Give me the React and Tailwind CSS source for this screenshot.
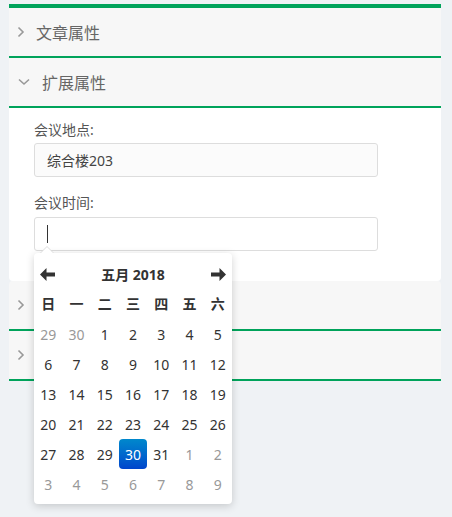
import React from 'react';

const FONT = { fontFamily: '"Noto Sans", "Noto Sans CJK SC", sans-serif' };

function ChevronRight() {
  return (
    <svg width="8" height="12" viewBox="0 0 8 12" className="shrink-0">
      <polyline points="1.5,1.5 6,6 1.5,10.5" fill="none" stroke="#999" strokeWidth="1.6" />
    </svg>
  );
}

function ChevronDown() {
  return (
    <svg width="12" height="8" viewBox="0 0 12 8" className="shrink-0">
      <polyline points="1,1.5 6,6 11,1.5" fill="none" stroke="#999" strokeWidth="1.6" />
    </svg>
  );
}

function Arrow({ dir }) {
  return (
    <svg width="15" height="13" viewBox="0 0 15 13" className={dir === 'right' ? 'rotate-180' : ''}>
      <path d="M0 6.5 L6.5 0 L6.5 4.5 L15 4.5 L15 8.5 L6.5 8.5 L6.5 13 Z" fill="#333" />
    </svg>
  );
}

// titles of the lower panels sit under the open datepicker, so they are left out
function PanelHeader({ title, open }) {
  return (
    <div className="h-[50px] bg-[#f7f7f7] border-b-2 border-[#00a35b] flex items-center">
      {open ? (
        <div className="pl-[9px] pr-[12px] flex items-center"><ChevronDown /></div>
      ) : (
        <div className="pl-[8px] pr-[11px] flex items-center"><ChevronRight /></div>
      )}
      {title && <span className="text-[16px] text-[#666] pt-[1px]">{title}</span>}
    </div>
  );
}

const weeks = [
  [[29, 1], [30, 1], [1], [2], [3], [4], [5]],
  [[6], [7], [8], [9], [10], [11], [12]],
  [[13], [14], [15], [16], [17], [18], [19]],
  [[20], [21], [22], [23], [24], [25], [26]],
  [[27], [28], [29], [30, 0, 1], [31], [1, 1], [2, 1]],
  [[3, 1], [4, 1], [5, 1], [6, 1], [7, 1], [8, 1], [9, 1]],
];

function DatePicker() {
  return (
    <div className="absolute left-0 top-[36px] w-[198px] bg-white rounded-[4px] shadow-[0_2px_8px_rgba(0,0,0,0.18)] pt-[6px] pb-[5px]">
      {/* caret */}
      <div className="absolute -top-[7px] left-[6px] w-0 h-0 border-x-[7px] border-x-transparent border-b-[7px] border-b-[#ddd]" />
      <div className="absolute -top-[6px] left-[7px] w-0 h-0 border-x-[6px] border-x-transparent border-b-[6px] border-b-white" />
      <div className="h-[30px] flex items-center justify-between px-[6px]">
        <Arrow dir="left" />
        <span className="text-[14px] font-bold text-[#333]">五月 2018</span>
        <Arrow dir="right" />
      </div>
      <div className="grid grid-cols-7 h-[30px] items-center text-center text-[14px] font-bold text-[#333]">
        {['日', '一', '二', '三', '四', '五', '六'].map((d) => (
          <div key={d} className="flex justify-center"><span className="leading-[18px]">{d}</span></div>
        ))}
      </div>
      {weeks.map((row, i) => (
        <div key={i} className="grid grid-cols-7 h-[30px] text-center text-[14px]">
          {row.map(([n, old, active], j) => (
            <div key={j} className="flex items-center justify-center">
              {active ? (
                <span className="w-[29px] h-[30px] rounded-[4px] bg-linear-to-b from-[#0088cc] to-[#0044cc] text-white flex items-center justify-center">
                  {n}
                </span>
              ) : (
                <span className={old ? 'text-[#999]' : 'text-[#333]'}>{n}</span>
              )}
            </div>
          ))}
        </div>
      ))}
    </div>
  );
}

export default function App() {
  return (
    <div className="w-[452px] h-[517px] bg-[#eff2f5] pt-[4px]" style={FONT}>
      <div className="ml-[9px] w-[432px]">
        <div className="h-[4px] bg-[#00a35b]" />
        <PanelHeader title="文章属性" />
        <PanelHeader title="扩展属性" open />
        <div className="bg-white rounded-b-[4px] pl-[25px] pt-[12px] pb-[30px]">
          <div className="text-[14px] text-[#555] leading-[20px]">会议地点:</div>
          <div className="mt-[3px] w-[344px] h-[34px] bg-[#fbfbfb] border border-[#ddd] rounded-[3px] flex items-center pl-[12px] text-[14px] text-[#444]">
            综合楼203
          </div>
          <div className="mt-[16px] text-[14px] text-[#555] leading-[20px]">会议时间:</div>
          <div className="relative mt-[4px] w-[344px]">
            <div className="h-[34px] bg-white border border-[#ddd] rounded-[3px] flex items-center pl-[12px]">
              <span className="w-px h-[18px] bg-[#333]" />
            </div>
            <DatePicker />
          </div>
        </div>
        <div className="rounded-t-[4px] overflow-hidden">
          <PanelHeader />
        </div>
        <PanelHeader />
      </div>
    </div>
  );
}
